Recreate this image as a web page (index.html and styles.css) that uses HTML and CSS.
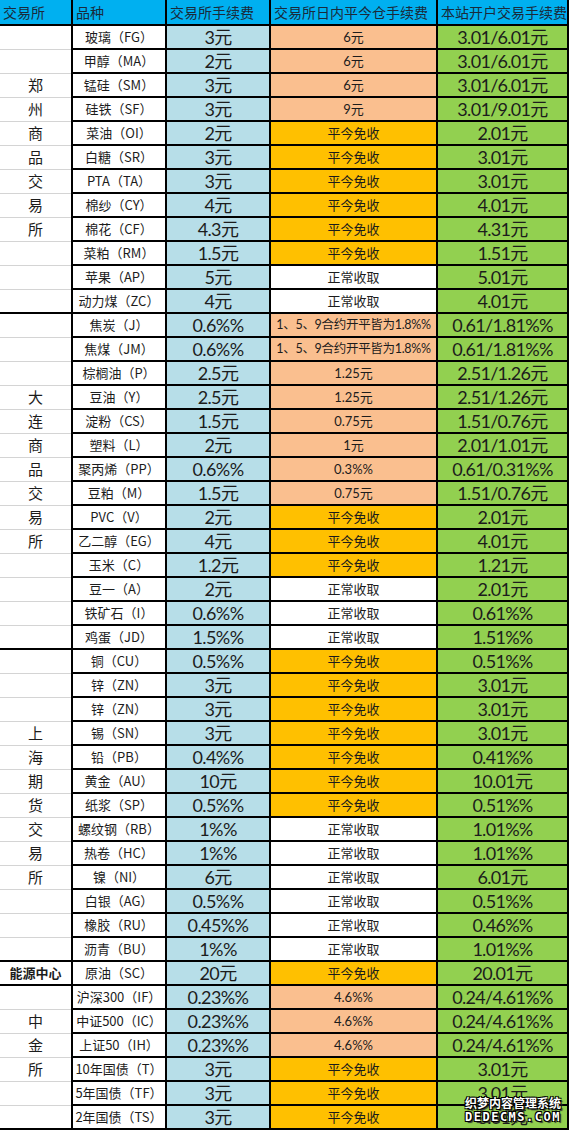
FILE: index.html
```html
<!DOCTYPE html>
<html lang="zh-CN">
<head>
    <meta charset="UTF-8">
    <meta name="viewport" content="width=device-width, initial-scale=1.0">
    <title>期货手续费一览</title>
    <link rel="stylesheet" href="styles.css">
</head>
<body>
    <div class="sheet">
        <table class="fees">
            <colgroup>
                <col class="c-ex">
                <col class="c-name">
                <col class="c-fee">
                <col class="c-today">
                <col class="c-ours">
            </colgroup>
            <thead>
                <tr>
                    <th>交易所</th>
                    <th>品种</th>
                    <th>交易所手续费</th>
                    <th>交易所日内平今仓手续费</th>
                    <th>本站开户交易手续费</th>
                </tr>
            </thead>
            <tbody>
                <!-- 郑州商品交易所 -->
                <tr><td class="ex first"></td><td class="name">玻璃（FG）</td><td class="fee">3元</td><td class="today peach">6元</td><td class="ours">3.01/6.01元</td></tr>
                <tr><td class="ex"></td><td class="name">甲醇（MA）</td><td class="fee">2元</td><td class="today peach">6元</td><td class="ours">3.01/6.01元</td></tr>
                <tr><td class="ex">郑</td><td class="name">锰硅（SM）</td><td class="fee">3元</td><td class="today peach">6元</td><td class="ours">3.01/6.01元</td></tr>
                <tr><td class="ex">州</td><td class="name">硅铁（SF）</td><td class="fee">3元</td><td class="today peach">9元</td><td class="ours">3.01/9.01元</td></tr>
                <tr><td class="ex">商</td><td class="name">菜油（OI）</td><td class="fee">2元</td><td class="today free">平今免收</td><td class="ours">2.01元</td></tr>
                <tr><td class="ex">品</td><td class="name">白糖（SR）</td><td class="fee">3元</td><td class="today free">平今免收</td><td class="ours">3.01元</td></tr>
                <tr><td class="ex">交</td><td class="name">PTA（TA）</td><td class="fee">3元</td><td class="today free">平今免收</td><td class="ours">3.01元</td></tr>
                <tr><td class="ex">易</td><td class="name">棉纱（CY）</td><td class="fee">4元</td><td class="today free">平今免收</td><td class="ours">4.01元</td></tr>
                <tr><td class="ex">所</td><td class="name">棉花（CF）</td><td class="fee">4.3元</td><td class="today free">平今免收</td><td class="ours">4.31元</td></tr>
                <tr><td class="ex"></td><td class="name">菜粕（RM）</td><td class="fee">1.5元</td><td class="today free">平今免收</td><td class="ours">1.51元</td></tr>
                <tr><td class="ex"></td><td class="name">苹果（AP）</td><td class="fee">5元</td><td class="today">正常收取</td><td class="ours">5.01元</td></tr>
                <tr><td class="ex"></td><td class="name">动力煤（ZC）</td><td class="fee">4元</td><td class="today">正常收取</td><td class="ours">4.01元</td></tr>

                <!-- 大连商品交易所 -->
                <tr><td class="ex first"></td><td class="name">焦炭（J）</td><td class="fee">0.6%%</td><td class="today peach tight">1、5、9合约开平皆为1.8%%</td><td class="ours">0.61/1.81%%</td></tr>
                <tr><td class="ex"></td><td class="name">焦煤（JM）</td><td class="fee">0.6%%</td><td class="today peach tight">1、5、9合约开平皆为1.8%%</td><td class="ours">0.61/1.81%%</td></tr>
                <tr><td class="ex"></td><td class="name">棕榈油（P）</td><td class="fee">2.5元</td><td class="today peach">1.25元</td><td class="ours">2.51/1.26元</td></tr>
                <tr><td class="ex">大</td><td class="name">豆油（Y）</td><td class="fee">2.5元</td><td class="today peach">1.25元</td><td class="ours">2.51/1.26元</td></tr>
                <tr><td class="ex">连</td><td class="name">淀粉（CS）</td><td class="fee">1.5元</td><td class="today peach">0.75元</td><td class="ours">1.51/0.76元</td></tr>
                <tr><td class="ex">商</td><td class="name">塑料（L）</td><td class="fee">2元</td><td class="today peach">1元</td><td class="ours">2.01/1.01元</td></tr>
                <tr><td class="ex">品</td><td class="name">聚丙烯（PP）</td><td class="fee">0.6%%</td><td class="today peach">0.3%%</td><td class="ours">0.61/0.31%%</td></tr>
                <tr><td class="ex">交</td><td class="name">豆粕（M）</td><td class="fee">1.5元</td><td class="today peach">0.75元</td><td class="ours">1.51/0.76元</td></tr>
                <tr><td class="ex">易</td><td class="name">PVC（V）</td><td class="fee">2元</td><td class="today free">平今免收</td><td class="ours">2.01元</td></tr>
                <tr><td class="ex">所</td><td class="name">乙二醇（EG）</td><td class="fee">4元</td><td class="today free">平今免收</td><td class="ours">4.01元</td></tr>
                <tr><td class="ex"></td><td class="name">玉米（C）</td><td class="fee">1.2元</td><td class="today free">平今免收</td><td class="ours">1.21元</td></tr>
                <tr><td class="ex"></td><td class="name">豆一（A）</td><td class="fee">2元</td><td class="today">正常收取</td><td class="ours">2.01元</td></tr>
                <tr><td class="ex"></td><td class="name">铁矿石（I）</td><td class="fee">0.6%%</td><td class="today">正常收取</td><td class="ours">0.61%%</td></tr>
                <tr><td class="ex"></td><td class="name">鸡蛋（JD）</td><td class="fee">1.5%%</td><td class="today">正常收取</td><td class="ours">1.51%%</td></tr>

                <!-- 上海期货交易所 -->
                <tr><td class="ex first"></td><td class="name">铜（CU）</td><td class="fee">0.5%%</td><td class="today free">平今免收</td><td class="ours">0.51%%</td></tr>
                <tr><td class="ex"></td><td class="name">锌（ZN）</td><td class="fee">3元</td><td class="today free">平今免收</td><td class="ours">3.01元</td></tr>
                <tr><td class="ex"></td><td class="name">锌（ZN）</td><td class="fee">3元</td><td class="today free">平今免收</td><td class="ours">3.01元</td></tr>
                <tr><td class="ex">上</td><td class="name">锡（SN）</td><td class="fee">3元</td><td class="today free">平今免收</td><td class="ours">3.01元</td></tr>
                <tr><td class="ex">海</td><td class="name">铅（PB）</td><td class="fee">0.4%%</td><td class="today free">平今免收</td><td class="ours">0.41%%</td></tr>
                <tr><td class="ex">期</td><td class="name">黄金（AU）</td><td class="fee">10元</td><td class="today free">平今免收</td><td class="ours">10.01元</td></tr>
                <tr><td class="ex">货</td><td class="name">纸浆（SP）</td><td class="fee">0.5%%</td><td class="today free">平今免收</td><td class="ours">0.51%%</td></tr>
                <tr><td class="ex">交</td><td class="name">螺纹钢（RB）</td><td class="fee">1%%</td><td class="today">正常收取</td><td class="ours">1.01%%</td></tr>
                <tr><td class="ex">易</td><td class="name">热卷（HC）</td><td class="fee">1%%</td><td class="today">正常收取</td><td class="ours">1.01%%</td></tr>
                <tr><td class="ex">所</td><td class="name">镍（NI）</td><td class="fee">6元</td><td class="today">正常收取</td><td class="ours">6.01元</td></tr>
                <tr><td class="ex"></td><td class="name">白银（AG）</td><td class="fee">0.5%%</td><td class="today">正常收取</td><td class="ours">0.51%%</td></tr>
                <tr><td class="ex"></td><td class="name">橡胶（RU）</td><td class="fee">0.45%%</td><td class="today">正常收取</td><td class="ours">0.46%%</td></tr>
                <tr><td class="ex"></td><td class="name">沥青（BU）</td><td class="fee">1%%</td><td class="today">正常收取</td><td class="ours">1.01%%</td></tr>

                <!-- 上海国际能源交易中心 -->
                <tr><td class="ex first energy">能源中心</td><td class="name">原油（SC）</td><td class="fee">20元</td><td class="today free">平今免收</td><td class="ours">20.01元</td></tr>

                <!-- 中国金融期货交易所 -->
                <tr><td class="ex first"></td><td class="name">沪深300（IF）</td><td class="fee">0.23%%</td><td class="today peach">4.6%%</td><td class="ours">0.24/4.61%%</td></tr>
                <tr><td class="ex">中</td><td class="name">中证500（IC）</td><td class="fee">0.23%%</td><td class="today peach">4.6%%</td><td class="ours">0.24/4.61%%</td></tr>
                <tr><td class="ex">金</td><td class="name">上证50（IH）</td><td class="fee">0.23%%</td><td class="today peach">4.6%%</td><td class="ours">0.24/4.61%%</td></tr>
                <tr><td class="ex">所</td><td class="name">10年国债（T）</td><td class="fee">3元</td><td class="today free">平今免收</td><td class="ours">3.01元</td></tr>
                <tr><td class="ex"></td><td class="name">5年国债（TF）</td><td class="fee">3元</td><td class="today free">平今免收</td><td class="ours">3.01元</td></tr>
                <tr><td class="ex last"></td><td class="name">2年国债（TS）</td><td class="fee">3元</td><td class="today free">平今免收</td><td class="ours">3.01元</td></tr>
            </tbody>
        </table>

        <div class="watermark">
            <span class="wm-cn">织梦内容管理系统</span>
            <span class="wm-en">DEDECMS.COM</span>
        </div>
    </div>
</body>
</html>
```

FILE: styles.css
```css
body {
    margin: 0;
    background: #fff;
    font-family: Lato, "Noto Sans CJK SC", sans-serif;
    color: #1c1c1c;
}

.sheet {
    position: relative;
    width: 571px;
}

.fees {
    border-collapse: collapse;
    table-layout: fixed;
    width: 568px;
}

.c-ex { width: 72px; }
.c-name { width: 94px; }
.c-fee { width: 104px; }
.c-today { width: 167px; }
.c-ours { width: 131px; }

.fees th {
    height: 24px;
    padding: 0 0 0 3px;
    background: #00b0f0;
    border: 2px solid #000;
    border-top: none;
    font-family: "Noto Sans CJK SC", sans-serif;
    font-size: 14px;
    font-weight: normal;
    text-align: left;
    color: #1a2a3a;
    white-space: nowrap;
    overflow: hidden;
}

.fees th:first-child {
    border-left: none;
}

.fees td {
    height: 22px;
    padding: 0;
    border: 2px solid #000;
    text-align: center;
    white-space: nowrap;
    overflow: hidden;
    line-height: 20px;
}

.fees td.ex {
    border-left: none;
    border-top: 1px solid #d4d4d4;
    border-bottom: 1px solid #d4d4d4;
    font-family: "Noto Sans CJK SC", sans-serif;
    font-size: 15px;
}

.fees td.ex.first {
    border-top: 2px solid #000;
}

.fees td.ex.last {
    border-bottom: 2px solid #000;
}

.fees td.energy {
    border-bottom: 2px solid #000;
    font-size: 13px;
    font-weight: bold;
}

.name {
    font-family: "Noto Sans CJK SC", sans-serif;
    font-size: 13px;
}

.fee {
    background: #b7dee8;
    font-size: 18px;
    letter-spacing: -0.6px;
}

.today {
    background: #fff;
    font-size: 13px;
}

.today.peach {
    background: #fabf8f;
}

.today.free {
    background: #ffc000;
}

.today.tight {
    font-size: 12.5px;
    letter-spacing: -0.3px;
}

.ours {
    background: #92d050;
    font-size: 18px;
    letter-spacing: -0.7px;
}

.watermark {
    position: absolute;
    right: 10px;
    bottom: 6px;
    display: flex;
    flex-direction: column;
    align-items: center;
    color: #fff;
    font-weight: bold;
    text-shadow: 1px 1px 0 #000, -1px -1px 0 #000, 1px -1px 0 #000, -1px 1px 0 #000, 2px 2px 1px #333;
}

.wm-cn {
    font-family: "Noto Sans CJK SC", sans-serif;
    font-size: 12px;
    line-height: 15px;
}

.wm-en {
    font-family: "DejaVu Sans Mono", monospace;
    font-size: 12px;
    letter-spacing: 1.5px;
    line-height: 14px;
}
```
